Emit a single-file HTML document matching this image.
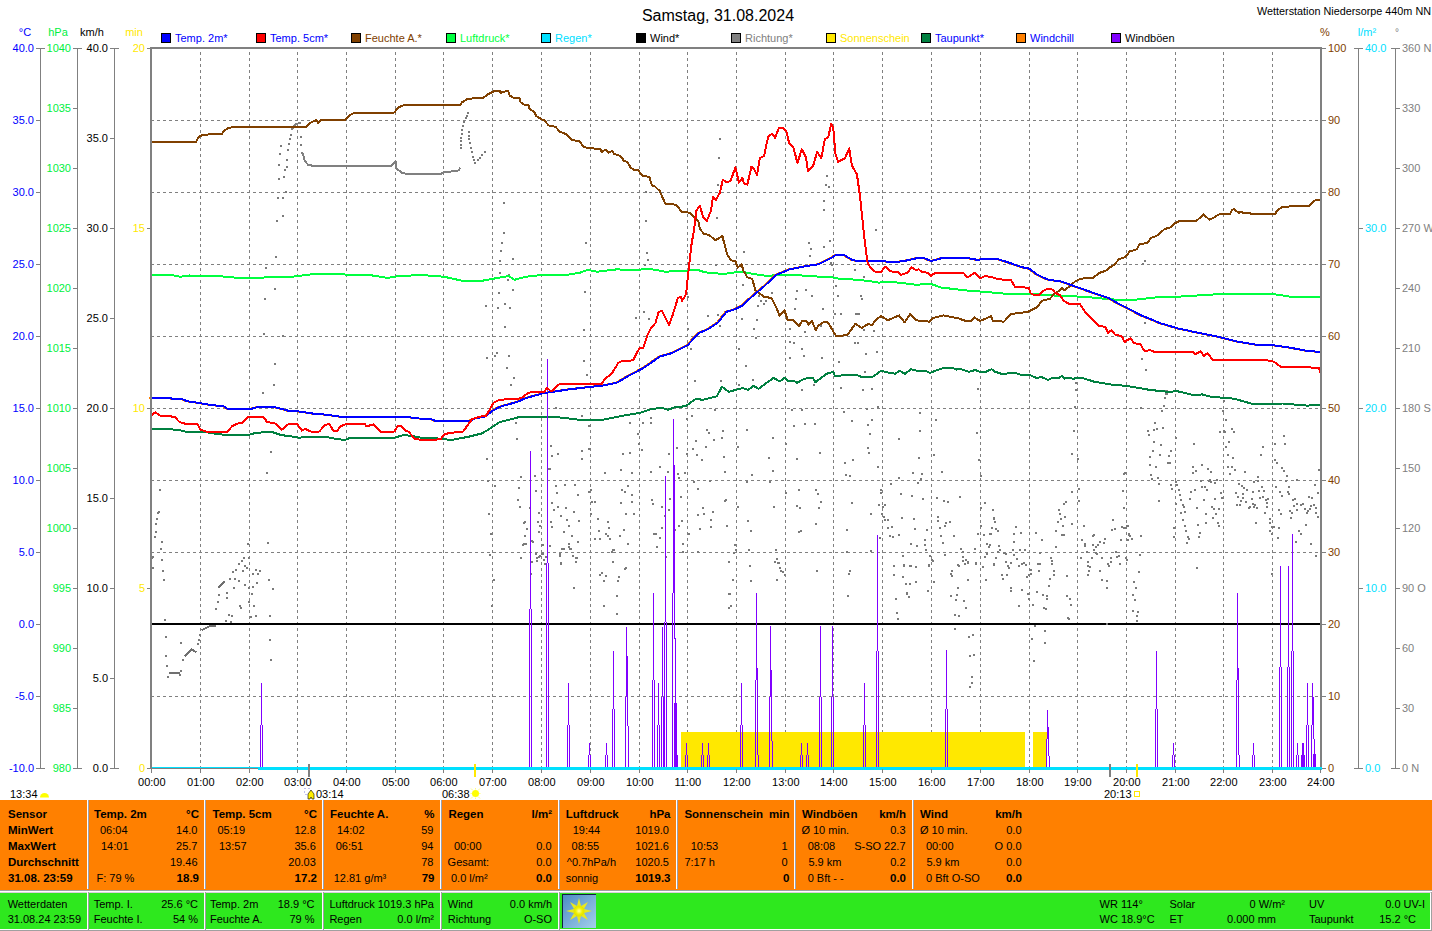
<!DOCTYPE html><html><head><meta charset="utf-8"><style>html,body{margin:0;padding:0;background:#fff;width:1432px;height:931px;overflow:hidden} svg{display:block} text{font-family:"Liberation Sans", sans-serif;font-size:11px}</style></head><body>
<svg width="1432" height="931" viewBox="0 0 1432 931">
<rect x="0" y="0" width="1432" height="931" fill="#fff"/>
<path d="M200.5 49V768M249.5 49V768M297.5 49V768M346.5 49V768M395.5 49V768M443.5 49V768M492.5 49V768M541.5 49V768M590.5 49V768M639.5 49V768M687.5 49V768M736.5 49V768M785.5 49V768M833.5 49V768M882.5 49V768M931.5 49V768M980.5 49V768M1029.5 49V768M1077.5 49V768M1126.5 49V768M1175.5 49V768M1223.5 49V768M1272.5 49V768" stroke="#808080" stroke-width="1" stroke-dasharray="3 3" stroke-dashoffset="-3" fill="none" shape-rendering="crispEdges"/>
<path d="M152 120.5H1320M152 192.5H1320M152 264.5H1320M152 336.5H1320M152 408.5H1320M152 480.5H1320M152 552.5H1320M152 624.5H1320M152 696.5H1320" stroke="#808080" stroke-width="1" stroke-dasharray="3 3" stroke-dashoffset="-5" fill="none" shape-rendering="crispEdges"/>
<rect x="152" y="623" width="1168" height="2" fill="#000"/>
<path d="M290 134h2v2h-2zM289 138h2v2h-2zM288 143h2v2h-2zM287 149h2v2h-2zM286 159h2v2h-2zM286 166h2v2h-2zM284 169h2v2h-2zM283 176h2v2h-2zM278 178h2v2h-2zM280 145h2v2h-2zM279 153h2v2h-2zM278 164h2v2h-2zM300 136h2v2h-2zM300 144h2v2h-2zM285 191h2v2h-2zM277 197h2v2h-2zM282 197h2v2h-2zM282 215h2v2h-2zM276 220h2v2h-2zM275 256h2v2h-2zM265 267h2v2h-2zM274 288h2v2h-2zM264 298h2v2h-2zM263 333h2v2h-2zM282 335h2v2h-2zM274 363h2v2h-2zM273 384h2v2h-2zM262 392h2v2h-2zM159 489h2v2h-2zM157 512h2v2h-2zM158 511h2v2h-2zM156 518h2v2h-2zM155 523h2v2h-2zM155 531h2v2h-2zM154 536h2v2h-2zM161 541h2v2h-2zM160 548h2v2h-2zM152 556h2v2h-2zM151 557h2v2h-2zM152 567h2v2h-2zM161 559h2v2h-2zM162 570h2v2h-2zM163 579h2v2h-2zM164 619h2v2h-2zM165 636h2v2h-2zM165 655h2v2h-2zM166 665h2v2h-2zM167 676h2v2h-2zM179 674h2v2h-2zM180 670h2v2h-2zM180 642h2v2h-2zM182 659h2v2h-2zM197 643h2v2h-2zM198 639h2v2h-2zM199 634h2v2h-2zM215 608h2v2h-2zM217 601h2v2h-2zM218 594h2v2h-2zM226 592h2v2h-2zM226 597h2v2h-2zM225 620h2v2h-2zM228 614h2v2h-2zM231 615h2v2h-2zM230 621h2v2h-2zM229 578h2v2h-2zM233 587h2v2h-2zM232 571h2v2h-2zM234 578h2v2h-2zM235 569h2v2h-2zM238 563h2v2h-2zM238 580h2v2h-2zM239 605h2v2h-2zM240 607h2v2h-2zM241 560h2v2h-2zM242 570h2v2h-2zM243 557h2v2h-2zM244 565h2v2h-2zM244 584h2v2h-2zM246 567h2v2h-2zM247 543h2v2h-2zM248 557h2v2h-2zM248 587h2v2h-2zM248 601h2v2h-2zM250 616h2v2h-2zM251 593h2v2h-2zM252 573h2v2h-2zM252 586h2v2h-2zM253 605h2v2h-2zM255 615h2v2h-2zM255 569h2v2h-2zM256 582h2v2h-2zM257 573h2v2h-2zM259 570h2v2h-2zM266 472h2v2h-2zM270 451h2v2h-2zM267 542h2v2h-2zM268 579h2v2h-2zM272 588h2v2h-2zM269 615h2v2h-2zM269 639h2v2h-2zM270 659h2v2h-2zM467 112h2v2h-2zM466 115h2v2h-2zM465 117h2v2h-2zM463 121h2v2h-2zM462 125h2v2h-2zM461 129h2v2h-2zM461 133h2v2h-2zM460 137h2v2h-2zM460 140h2v2h-2zM460 144h2v2h-2zM460 147h2v2h-2zM468 131h2v2h-2zM468 135h2v2h-2zM468 138h2v2h-2zM469 142h2v2h-2zM470 147h2v2h-2zM471 151h2v2h-2zM472 156h2v2h-2zM473 159h2v2h-2zM474 162h2v2h-2zM477 159h2v2h-2zM479 157h2v2h-2zM481 154h2v2h-2zM484 151h2v2h-2zM503 202h2v2h-2zM503 232h2v2h-2zM501 242h2v2h-2zM500 250h2v2h-2zM499 260h2v2h-2zM512 258h2v2h-2zM499 272h2v2h-2zM508 274h2v2h-2zM507 279h2v2h-2zM498 292h2v2h-2zM512 289h2v2h-2zM485 305h2v2h-2zM497 307h2v2h-2zM504 303h2v2h-2zM509 307h2v2h-2zM504 326h2v2h-2zM585 242h2v2h-2zM584 291h2v2h-2zM583 329h2v2h-2zM486 357h2v2h-2zM494 355h2v2h-2zM496 352h2v2h-2zM508 355h2v2h-2zM506 367h2v2h-2zM513 377h2v2h-2zM510 384h2v2h-2zM515 422h2v2h-2zM516 438h2v2h-2zM486 458h2v2h-2zM487 480h2v2h-2zM494 485h2v2h-2zM488 513h2v2h-2zM490 533h2v2h-2zM489 554h2v2h-2zM520 476h2v2h-2zM518 487h2v2h-2zM517 499h2v2h-2zM519 506h2v2h-2zM523 522h2v2h-2zM524 521h2v2h-2zM526 528h2v2h-2zM524 535h2v2h-2zM523 543h2v2h-2zM525 543h2v2h-2zM520 557h2v2h-2zM529 507h2v2h-2zM534 475h2v2h-2zM535 490h2v2h-2zM538 512h2v2h-2zM537 521h2v2h-2zM539 525h2v2h-2zM538 531h2v2h-2zM532 541h2v2h-2zM541 544h2v2h-2zM541 553h2v2h-2zM538 556h2v2h-2zM536 560h2v2h-2zM543 559h2v2h-2zM547 468h2v2h-2zM550 445h2v2h-2zM551 455h2v2h-2zM555 407h2v2h-2zM557 453h2v2h-2zM555 485h2v2h-2zM556 492h2v2h-2zM551 502h2v2h-2zM557 506h2v2h-2zM553 509h2v2h-2zM551 526h2v2h-2zM560 515h2v2h-2zM564 484h2v2h-2zM565 507h2v2h-2zM566 519h2v2h-2zM568 525h2v2h-2zM563 531h2v2h-2zM561 548h2v2h-2zM568 546h2v2h-2zM569 548h2v2h-2zM571 535h2v2h-2zM573 511h2v2h-2zM574 484h2v2h-2zM578 520h2v2h-2zM577 494h2v2h-2zM577 541h2v2h-2zM575 557h2v2h-2zM559 555h2v2h-2zM560 562h2v2h-2zM549 545h2v2h-2zM581 415h2v2h-2zM583 360h2v2h-2zM586 374h2v2h-2zM588 425h2v2h-2zM581 450h2v2h-2zM581 458h2v2h-2zM588 448h2v2h-2zM588 491h2v2h-2zM550 521h2v2h-2zM549 468h2v2h-2zM489 554h2v2h-2zM493 579h2v2h-2zM491 605h2v2h-2zM522 544h2v2h-2zM525 543h2v2h-2zM520 557h2v2h-2zM531 540h2v2h-2zM531 561h2v2h-2zM530 573h2v2h-2zM535 553h2v2h-2zM536 557h2v2h-2zM539 555h2v2h-2zM542 544h2v2h-2zM542 553h2v2h-2zM544 563h2v2h-2zM545 556h2v2h-2zM549 545h2v2h-2zM559 553h2v2h-2zM560 563h2v2h-2zM563 548h2v2h-2zM568 543h2v2h-2zM570 548h2v2h-2zM572 555h2v2h-2zM576 557h2v2h-2zM575 561h2v2h-2zM577 541h2v2h-2zM573 587h2v2h-2zM719 138h2v2h-2zM718 157h2v2h-2zM717 184h2v2h-2zM645 191h2v2h-2zM645 220h2v2h-2zM646 252h2v2h-2zM647 259h2v2h-2zM644 264h2v2h-2zM716 217h2v2h-2zM715 264h2v2h-2zM687 296h2v2h-2zM643 311h2v2h-2zM635 317h2v2h-2zM648 318h2v2h-2zM687 328h2v2h-2zM707 315h2v2h-2zM717 314h2v2h-2zM719 325h2v2h-2zM690 348h2v2h-2zM694 380h2v2h-2zM720 380h2v2h-2zM686 418h2v2h-2zM691 415h2v2h-2zM714 409h2v2h-2zM650 417h2v2h-2zM642 422h2v2h-2zM629 422h2v2h-2zM637 433h2v2h-2zM638 443h2v2h-2zM641 449h2v2h-2zM650 422h2v2h-2zM706 429h2v2h-2zM708 432h2v2h-2zM695 440h2v2h-2zM713 439h2v2h-2zM722 430h2v2h-2zM705 446h2v2h-2zM692 448h2v2h-2zM676 447h2v2h-2zM668 453h2v2h-2zM696 454h2v2h-2zM701 459h2v2h-2zM723 456h2v2h-2zM686 453h2v2h-2zM622 453h2v2h-2zM629 452h2v2h-2zM620 469h2v2h-2zM604 472h2v2h-2zM631 472h2v2h-2zM650 471h2v2h-2zM659 466h2v2h-2zM667 471h2v2h-2zM677 473h2v2h-2zM684 472h2v2h-2zM678 477h2v2h-2zM724 471h2v2h-2zM709 480h2v2h-2zM693 481h2v2h-2zM627 485h2v2h-2zM621 489h2v2h-2zM624 491h2v2h-2zM631 494h2v2h-2zM590 489h2v2h-2zM591 501h2v2h-2zM594 501h2v2h-2zM620 502h2v2h-2zM631 501h2v2h-2zM651 499h2v2h-2zM652 503h2v2h-2zM669 498h2v2h-2zM680 496h2v2h-2zM697 488h2v2h-2zM725 499h2v2h-2zM702 507h2v2h-2zM712 511h2v2h-2zM697 514h2v2h-2zM703 513h2v2h-2zM625 513h2v2h-2zM633 513h2v2h-2zM590 513h2v2h-2zM597 518h2v2h-2zM607 521h2v2h-2zM661 506h2v2h-2zM664 515h2v2h-2zM668 509h2v2h-2zM681 520h2v2h-2zM678 525h2v2h-2zM661 527h2v2h-2zM673 515h2v2h-2zM710 519h2v2h-2zM710 526h2v2h-2zM726 525h2v2h-2zM699 528h2v2h-2zM688 533h2v2h-2zM682 543h2v2h-2zM674 529h2v2h-2zM659 537h2v2h-2zM655 533h2v2h-2zM653 533h2v2h-2zM623 529h2v2h-2zM619 535h2v2h-2zM608 527h2v2h-2zM605 533h2v2h-2zM607 535h2v2h-2zM609 538h2v2h-2zM598 530h2v2h-2zM594 538h2v2h-2zM599 538h2v2h-2zM627 543h2v2h-2zM612 549h2v2h-2zM613 549h2v2h-2zM611 551h2v2h-2zM656 546h2v2h-2zM665 556h2v2h-2zM612 561h2v2h-2zM625 567h2v2h-2zM682 551h2v2h-2zM728 561h2v2h-2zM697 551h2v2h-2zM612 561h2v2h-2zM624 568h2v2h-2zM599 574h2v2h-2zM601 572h2v2h-2zM605 575h2v2h-2zM618 576h2v2h-2zM603 580h2v2h-2zM617 580h2v2h-2zM616 595h2v2h-2zM603 605h2v2h-2zM616 613h2v2h-2zM728 561h2v2h-2zM728 593h2v2h-2zM728 607h2v2h-2zM826 175h2v2h-2zM825 184h2v2h-2zM828 186h2v2h-2zM823 200h2v2h-2zM823 209h2v2h-2zM808 242h2v2h-2zM810 248h2v2h-2zM823 246h2v2h-2zM829 240h2v2h-2zM809 255h2v2h-2zM743 251h2v2h-2zM742 284h2v2h-2zM758 295h2v2h-2zM760 300h2v2h-2zM763 303h2v2h-2zM765 300h2v2h-2zM771 292h2v2h-2zM757 305h2v2h-2zM741 318h2v2h-2zM756 319h2v2h-2zM753 328h2v2h-2zM796 290h2v2h-2zM795 298h2v2h-2zM805 289h2v2h-2zM811 295h2v2h-2zM794 308h2v2h-2zM822 308h2v2h-2zM830 262h2v2h-2zM831 264h2v2h-2zM835 285h2v2h-2zM837 295h2v2h-2zM834 313h2v2h-2zM840 313h2v2h-2zM854 269h2v2h-2zM855 313h2v2h-2zM789 328h2v2h-2zM804 331h2v2h-2zM820 325h2v2h-2zM755 337h2v2h-2zM755 337h2v2h-2zM738 348h2v2h-2zM745 365h2v2h-2zM752 379h2v2h-2zM720 380h2v2h-2zM738 384h2v2h-2zM789 341h2v2h-2zM793 342h2v2h-2zM801 348h2v2h-2zM803 355h2v2h-2zM789 357h2v2h-2zM821 357h2v2h-2zM838 361h2v2h-2zM854 342h2v2h-2zM840 387h2v2h-2zM801 389h2v2h-2zM813 384h2v2h-2zM791 409h2v2h-2zM801 409h2v2h-2zM843 411h2v2h-2zM722 430h2v2h-2zM721 437h2v2h-2zM746 429h2v2h-2zM772 437h2v2h-2zM793 425h2v2h-2zM804 423h2v2h-2zM814 423h2v2h-2zM851 420h2v2h-2zM737 446h2v2h-2zM785 443h2v2h-2zM723 456h2v2h-2zM768 457h2v2h-2zM796 458h2v2h-2zM819 452h2v2h-2zM844 462h2v2h-2zM852 459h2v2h-2zM724 471h2v2h-2zM772 470h2v2h-2zM751 474h2v2h-2zM746 481h2v2h-2zM769 481h2v2h-2zM845 474h2v2h-2zM849 475h2v2h-2zM724 500h2v2h-2zM737 506h2v2h-2zM773 506h2v2h-2zM785 492h2v2h-2zM798 489h2v2h-2zM796 505h2v2h-2zM799 507h2v2h-2zM815 489h2v2h-2zM817 493h2v2h-2zM820 501h2v2h-2zM818 507h2v2h-2zM851 502h2v2h-2zM747 520h2v2h-2zM726 525h2v2h-2zM750 530h2v2h-2zM815 523h2v2h-2zM798 531h2v2h-2zM800 530h2v2h-2zM846 529h2v2h-2zM734 544h2v2h-2zM735 549h2v2h-2zM733 552h2v2h-2zM748 549h2v2h-2zM775 549h2v2h-2zM776 558h2v2h-2zM778 562h2v2h-2zM728 561h2v2h-2zM749 565h2v2h-2zM846 551h2v2h-2zM728 561h2v2h-2zM749 565h2v2h-2zM774 561h2v2h-2zM777 562h2v2h-2zM779 567h2v2h-2zM780 570h2v2h-2zM782 571h2v2h-2zM784 574h2v2h-2zM732 579h2v2h-2zM750 580h2v2h-2zM776 579h2v2h-2zM729 593h2v2h-2zM730 605h2v2h-2zM728 607h2v2h-2zM816 570h2v2h-2zM849 570h2v2h-2zM848 573h2v2h-2zM847 595h2v2h-2zM875 229h2v2h-2zM863 276h2v2h-2zM860 295h2v2h-2zM861 298h2v2h-2zM857 313h2v2h-2zM858 313h2v2h-2zM873 330h2v2h-2zM863 329h2v2h-2zM873 330h2v2h-2zM857 342h2v2h-2zM865 353h2v2h-2zM876 351h2v2h-2zM864 371h2v2h-2zM862 389h2v2h-2zM871 388h2v2h-2zM977 388h2v2h-2zM866 408h2v2h-2zM877 406h2v2h-2zM871 419h2v2h-2zM919 412h2v2h-2zM935 419h2v2h-2zM867 424h2v2h-2zM869 433h2v2h-2zM898 438h2v2h-2zM919 430h2v2h-2zM976 432h2v2h-2zM867 447h2v2h-2zM868 452h2v2h-2zM918 457h2v2h-2zM933 454h2v2h-2zM978 459h2v2h-2zM877 466h2v2h-2zM912 472h2v2h-2zM921 473h2v2h-2zM941 471h2v2h-2zM898 477h2v2h-2zM917 482h2v2h-2zM920 478h2v2h-2zM980 475h2v2h-2zM890 483h2v2h-2zM880 489h2v2h-2zM880 492h2v2h-2zM900 493h2v2h-2zM911 495h2v2h-2zM922 498h2v2h-2zM936 497h2v2h-2zM943 500h2v2h-2zM947 501h2v2h-2zM959 496h2v2h-2zM878 504h2v2h-2zM882 506h2v2h-2zM884 504h2v2h-2zM870 513h2v2h-2zM881 513h2v2h-2zM883 516h2v2h-2zM884 519h2v2h-2zM887 519h2v2h-2zM901 517h2v2h-2zM913 518h2v2h-2zM937 516h2v2h-2zM937 520h2v2h-2zM945 522h2v2h-2zM949 521h2v2h-2zM944 525h2v2h-2zM939 527h2v2h-2zM984 502h2v2h-2zM980 507h2v2h-2zM992 509h2v2h-2zM993 518h2v2h-2zM887 527h2v2h-2zM891 526h2v2h-2zM914 528h2v2h-2zM926 529h2v2h-2zM940 535h2v2h-2zM953 535h2v2h-2zM980 525h2v2h-2zM977 533h2v2h-2zM983 534h2v2h-2zM990 533h2v2h-2zM889 535h2v2h-2zM892 536h2v2h-2zM898 534h2v2h-2zM879 537h2v2h-2zM910 543h2v2h-2zM916 545h2v2h-2zM924 539h2v2h-2zM924 544h2v2h-2zM942 542h2v2h-2zM986 543h2v2h-2zM988 546h2v2h-2zM870 550h2v2h-2zM902 555h2v2h-2zM925 549h2v2h-2zM929 555h2v2h-2zM931 559h2v2h-2zM944 554h2v2h-2zM960 548h2v2h-2zM962 551h2v2h-2zM962 556h2v2h-2zM965 559h2v2h-2zM967 562h2v2h-2zM974 548h2v2h-2zM984 556h2v2h-2zM986 553h2v2h-2zM893 565h2v2h-2zM903 564h2v2h-2zM909 565h2v2h-2zM915 566h2v2h-2zM928 564h2v2h-2zM957 564h2v2h-2zM975 563h2v2h-2zM982 566h2v2h-2zM993 564h2v2h-2zM893 565h2v2h-2zM903 565h2v2h-2zM910 565h2v2h-2zM915 566h2v2h-2zM893 574h2v2h-2zM902 576h2v2h-2zM905 583h2v2h-2zM909 583h2v2h-2zM915 581h2v2h-2zM906 592h2v2h-2zM906 593h2v2h-2zM908 596h2v2h-2zM895 598h2v2h-2zM896 612h2v2h-2zM897 618h2v2h-2zM928 565h2v2h-2zM932 560h2v2h-2zM933 581h2v2h-2zM927 590h2v2h-2zM951 570h2v2h-2zM950 573h2v2h-2zM951 575h2v2h-2zM958 565h2v2h-2zM962 560h2v2h-2zM964 563h2v2h-2zM967 561h2v2h-2zM975 562h2v2h-2zM982 566h2v2h-2zM993 563h2v2h-2zM967 579h2v2h-2zM985 579h2v2h-2zM957 587h2v2h-2zM950 595h2v2h-2zM956 594h2v2h-2zM955 599h2v2h-2zM963 600h2v2h-2zM965 607h2v2h-2zM954 614h2v2h-2zM958 615h2v2h-2zM954 628h2v2h-2zM968 636h2v2h-2zM972 634h2v2h-2zM969 655h2v2h-2zM973 654h2v2h-2zM971 676h2v2h-2zM971 682h2v2h-2zM969 686h2v2h-2zM1075 382h2v2h-2zM1075 389h2v2h-2zM1074 406h2v2h-2zM1073 430h2v2h-2zM1071 453h2v2h-2zM1077 458h2v2h-2zM992 509h2v2h-2zM993 517h2v2h-2zM994 521h2v2h-2zM991 527h2v2h-2zM995 528h2v2h-2zM997 530h2v2h-2zM989 533h2v2h-2zM1015 526h2v2h-2zM1013 533h2v2h-2zM1020 532h2v2h-2zM1013 541h2v2h-2zM989 544h2v2h-2zM998 545h2v2h-2zM999 549h2v2h-2zM997 551h2v2h-2zM1003 552h2v2h-2zM1005 553h2v2h-2zM1012 549h2v2h-2zM1013 554h2v2h-2zM1019 549h2v2h-2zM1024 549h2v2h-2zM995 557h2v2h-2zM993 563h2v2h-2zM1005 561h2v2h-2zM1007 565h2v2h-2zM1010 562h2v2h-2zM1008 567h2v2h-2zM1016 558h2v2h-2zM1018 565h2v2h-2zM1021 563h2v2h-2zM1023 562h2v2h-2zM1025 564h2v2h-2zM1001 574h2v2h-2zM1002 578h2v2h-2zM1006 574h2v2h-2zM1010 587h2v2h-2zM1010 590h2v2h-2zM1021 589h2v2h-2zM1018 605h2v2h-2zM1026 576h2v2h-2zM1028 574h2v2h-2zM1030 569h2v2h-2zM1030 573h2v2h-2zM1027 593h2v2h-2zM1028 598h2v2h-2zM1035 532h2v2h-2zM1041 539h2v2h-2zM1039 552h2v2h-2zM1037 563h2v2h-2zM1039 563h2v2h-2zM1038 570h2v2h-2zM1036 591h2v2h-2zM1032 604h2v2h-2zM1042 594h2v2h-2zM1046 595h2v2h-2zM1046 598h2v2h-2zM1043 607h2v2h-2zM1045 608h2v2h-2zM1048 585h2v2h-2zM1049 578h2v2h-2zM1050 557h2v2h-2zM1051 560h2v2h-2zM1051 563h2v2h-2zM1053 570h2v2h-2zM1053 574h2v2h-2zM1055 546h2v2h-2zM1055 530h2v2h-2zM1057 521h2v2h-2zM1058 509h2v2h-2zM1059 513h2v2h-2zM1060 518h2v2h-2zM1063 503h2v2h-2zM1065 501h2v2h-2zM1064 516h2v2h-2zM1062 525h2v2h-2zM1061 534h2v2h-2zM1063 534h2v2h-2zM1071 491h2v2h-2zM1078 488h2v2h-2zM1078 500h2v2h-2zM1071 523h2v2h-2zM1066 575h2v2h-2zM1066 595h2v2h-2zM1069 598h2v2h-2zM1070 604h2v2h-2zM1067 617h2v2h-2zM1068 618h2v2h-2zM1034 625h2v2h-2zM1031 638h2v2h-2zM1044 630h2v2h-2zM1044 642h2v2h-2zM1033 660h2v2h-2zM1083 525h2v2h-2zM1081 539h2v2h-2zM1084 543h2v2h-2zM1084 545h2v2h-2zM1080 557h2v2h-2zM1086 551h2v2h-2zM1087 561h2v2h-2zM1087 565h2v2h-2zM1089 566h2v2h-2zM1088 570h2v2h-2zM1087 574h2v2h-2zM1092 535h2v2h-2zM1093 534h2v2h-2zM1092 544h2v2h-2zM1091 557h2v2h-2zM1093 549h2v2h-2zM1095 546h2v2h-2zM1097 544h2v2h-2zM1099 541h2v2h-2zM1103 542h2v2h-2zM1104 538h2v2h-2zM1095 552h2v2h-2zM1096 553h2v2h-2zM1101 557h2v2h-2zM1099 570h2v2h-2zM1101 579h2v2h-2zM1106 580h2v2h-2zM1106 587h2v2h-2zM1107 563h2v2h-2zM1108 565h2v2h-2zM1110 561h2v2h-2zM1110 557h2v2h-2zM1112 519h2v2h-2zM1111 529h2v2h-2zM1114 528h2v2h-2zM1115 551h2v2h-2zM1116 556h2v2h-2zM1118 555h2v2h-2zM1119 563h2v2h-2zM1121 526h2v2h-2zM1123 527h2v2h-2zM1124 527h2v2h-2zM1127 525h2v2h-2zM1120 539h2v2h-2zM1123 507h2v2h-2zM1122 490h2v2h-2zM1123 473h2v2h-2zM1124 472h2v2h-2zM1125 557h2v2h-2zM1127 539h2v2h-2zM1128 534h2v2h-2zM1106 623h2v2h-2zM1166 390h2v2h-2zM1165 393h2v2h-2zM1164 397h2v2h-2zM1163 405h2v2h-2zM1161 410h2v2h-2zM1140 407h2v2h-2zM1154 422h2v2h-2zM1147 430h2v2h-2zM1153 429h2v2h-2zM1156 428h2v2h-2zM1162 427h2v2h-2zM1148 434h2v2h-2zM1153 441h2v2h-2zM1160 444h2v2h-2zM1152 450h2v2h-2zM1159 454h2v2h-2zM1170 450h2v2h-2zM1168 455h2v2h-2zM1149 456h2v2h-2zM1167 462h2v2h-2zM1169 462h2v2h-2zM1149 464h2v2h-2zM1155 466h2v2h-2zM1150 474h2v2h-2zM1151 478h2v2h-2zM1157 477h2v2h-2zM1158 483h2v2h-2zM1158 500h2v2h-2zM1124 472h2v2h-2zM1175 437h2v2h-2zM1193 443h2v2h-2zM1192 466h2v2h-2zM1192 472h2v2h-2zM1195 470h2v2h-2zM1201 464h2v2h-2zM1207 468h2v2h-2zM1210 471h2v2h-2zM1170 484h2v2h-2zM1171 488h2v2h-2zM1175 481h2v2h-2zM1176 484h2v2h-2zM1178 489h2v2h-2zM1179 494h2v2h-2zM1180 499h2v2h-2zM1182 504h2v2h-2zM1183 506h2v2h-2zM1175 503h2v2h-2zM1180 512h2v2h-2zM1184 511h2v2h-2zM1182 519h2v2h-2zM1184 525h2v2h-2zM1185 530h2v2h-2zM1187 536h2v2h-2zM1188 538h2v2h-2zM1186 542h2v2h-2zM1173 527h2v2h-2zM1173 536h2v2h-2zM1190 491h2v2h-2zM1194 489h2v2h-2zM1189 498h2v2h-2zM1196 507h2v2h-2zM1197 524h2v2h-2zM1199 532h2v2h-2zM1198 536h2v2h-2zM1200 480h2v2h-2zM1201 486h2v2h-2zM1204 486h2v2h-2zM1206 489h2v2h-2zM1203 499h2v2h-2zM1205 513h2v2h-2zM1205 522h2v2h-2zM1208 480h2v2h-2zM1209 479h2v2h-2zM1210 481h2v2h-2zM1214 482h2v2h-2zM1216 479h2v2h-2zM1214 498h2v2h-2zM1211 506h2v2h-2zM1213 508h2v2h-2zM1215 513h2v2h-2zM1212 517h2v2h-2zM1218 508h2v2h-2zM1217 522h2v2h-2zM1218 525h2v2h-2zM1220 492h2v2h-2zM1221 497h2v2h-2zM1219 431h2v2h-2zM1223 430h2v2h-2zM1224 431h2v2h-2zM1225 419h2v2h-2zM1222 410h2v2h-2zM1223 400h2v2h-2zM1228 441h2v2h-2zM1225 446h2v2h-2zM1227 454h2v2h-2zM1227 466h2v2h-2zM1229 473h2v2h-2zM1231 466h2v2h-2zM1232 457h2v2h-2zM1234 469h2v2h-2zM1231 428h2v2h-2zM1233 431h2v2h-2zM1244 471h2v2h-2zM1235 492h2v2h-2zM1237 496h2v2h-2zM1236 504h2v2h-2zM1239 504h2v2h-2zM1240 500h2v2h-2zM1242 497h2v2h-2zM1242 493h2v2h-2zM1238 483h2v2h-2zM1241 485h2v2h-2zM1243 487h2v2h-2zM1246 489h2v2h-2zM1245 501h2v2h-2zM1248 507h2v2h-2zM1249 506h2v2h-2zM1252 503h2v2h-2zM1253 506h2v2h-2zM1251 498h2v2h-2zM1254 504h2v2h-2zM1256 507h2v2h-2zM1252 491h2v2h-2zM1253 481h2v2h-2zM1257 476h2v2h-2zM1257 480h2v2h-2zM1258 490h2v2h-2zM1259 497h2v2h-2zM1261 486h2v2h-2zM1262 496h2v2h-2zM1263 490h2v2h-2zM1265 499h2v2h-2zM1267 498h2v2h-2zM1266 502h2v2h-2zM1266 506h2v2h-2zM1264 512h2v2h-2zM1255 522h2v2h-2zM1260 454h2v2h-2zM1262 446h2v2h-2zM1269 518h2v2h-2zM1269 522h2v2h-2zM1271 526h2v2h-2zM1269 530h2v2h-2zM1273 526h2v2h-2zM1271 533h2v2h-2zM1277 537h2v2h-2zM1278 527h2v2h-2zM1274 443h2v2h-2zM1274 459h2v2h-2zM1276 462h2v2h-2zM1283 435h2v2h-2zM1284 443h2v2h-2zM1281 467h2v2h-2zM1283 470h2v2h-2zM1286 475h2v2h-2zM1285 480h2v2h-2zM1275 486h2v2h-2zM1279 491h2v2h-2zM1281 495h2v2h-2zM1288 486h2v2h-2zM1287 491h2v2h-2zM1288 493h2v2h-2zM1278 509h2v2h-2zM1280 513h2v2h-2zM1292 499h2v2h-2zM1294 498h2v2h-2zM1296 503h2v2h-2zM1293 505h2v2h-2zM1289 510h2v2h-2zM1290 517h2v2h-2zM1291 512h2v2h-2zM1296 509h2v2h-2zM1300 504h2v2h-2zM1302 503h2v2h-2zM1304 508h2v2h-2zM1306 512h2v2h-2zM1307 510h2v2h-2zM1309 508h2v2h-2zM1310 505h2v2h-2zM1313 504h2v2h-2zM1315 507h2v2h-2zM1315 512h2v2h-2zM1317 516h2v2h-2zM1308 496h2v2h-2zM1311 497h2v2h-2zM1314 484h2v2h-2zM1317 492h2v2h-2zM1318 469h2v2h-2zM1296 479h2v2h-2zM1305 524h2v2h-2zM1298 530h2v2h-2zM1300 533h2v2h-2zM1295 541h2v2h-2zM1310 543h2v2h-2zM1315 555h2v2h-2zM1126 525h2v2h-2zM1125 527h2v2h-2zM1128 533h2v2h-2zM1129 535h2v2h-2zM1127 539h2v2h-2zM1131 538h2v2h-2zM1140 535h2v2h-2zM1139 554h2v2h-2zM1142 263h2v2h-2zM1144 260h2v2h-2zM1144 322h2v2h-2zM1141 358h2v2h-2zM1145 369h2v2h-2zM1165 390h2v2h-2zM1166 393h2v2h-2zM1126 559h2v2h-2zM1139 554h2v2h-2zM1138 571h2v2h-2zM1133 581h2v2h-2zM1135 587h2v2h-2zM1132 594h2v2h-2zM1134 599h2v2h-2zM1132 610h2v2h-2zM1137 611h2v2h-2zM1136 615h2v2h-2zM1136 620h2v2h-2zM1196 567h2v2h-2zM1271 573h2v2h-2zM1315 555h2v2h-2z" fill="#7a7a7a"/>
<path d="M169.3 672.5 L179.7 672.5" stroke="#707070" stroke-width="2" fill="none" stroke-linejoin="round" shape-rendering="crispEdges"/>
<path d="M184.8 656.0 L191.3 649.5 L196.4 652.1" stroke="#707070" stroke-width="2" fill="none" stroke-linejoin="round" shape-rendering="crispEdges"/>
<path d="M201.6 630.2 L209.3 626.3 L216.5 625.5" stroke="#707070" stroke-width="2" fill="none" stroke-linejoin="round" shape-rendering="crispEdges"/>
<path d="M218.3 587.6 L224.8 581.2" stroke="#707070" stroke-width="2" fill="none" stroke-linejoin="round" shape-rendering="crispEdges"/>
<rect x="681" y="732" width="344" height="35" fill="#ffe800"/>
<rect x="1033" y="732" width="14" height="35" fill="#ffe800"/>
<path d="M302.0 152.0 L303.8 157.0 L304.7 160.4 L306.1 162.6 L308.3 164.9 L312.1 165.6 L391.3 165.6 L393.2 164.2 L395.4 161.0 L396.3 163.0 L396.0 167.9 L401.4 172.6 L405.1 173.6 L441.6 173.6 L444.1 171.7 L455.4 171.4 L458.6 170.4 L460.2 167.6" stroke="#808080" stroke-width="2" fill="none" stroke-linejoin="round" shape-rendering="crispEdges"/>
<path d="M291.5 130.0 L294.8 124.8 L297.0 123.6 L301.0 123.2" stroke="#808080" stroke-width="2" fill="none" stroke-linejoin="round" shape-rendering="crispEdges"/>
<path d="M150.0 274.9 L170.7 274.9 L180.2 276.8 L189.6 275.5 L206.6 276.4 L221.6 276.4 L238.6 277.9 L259.4 277.9 L272.5 276.8 L291.4 276.8 L310.3 274.5 L323.5 273.6 L338.5 273.6 L351.7 275.5 L363.0 274.5 L372.5 275.5 L387.6 277.9 L397.0 276.4 L420.0 274.9 L444.5 276.8 L463.4 281.1 L480.3 281.1 L493.5 278.7 L508.6 276.0 L514.3 279.8 L525.6 276.8 L542.5 274.9 L563.3 275.5 L580.3 272.6 L587.8 269.8 L597.2 271.7 L618.0 269.2 L627.4 270.4 L650.0 268.9 L665.1 271.7 L686.1 270.7 L697.4 269.9 L705.5 272.4 L723.2 274.0 L740.9 271.6 L753.8 274.0 L766.7 275.9 L782.8 274.8 L798.9 275.3 L815.0 276.4 L831.2 277.2 L839.2 278.8 L855.3 279.6 L870.0 281.2 L878.2 282.6 L892.1 281.9 L915.9 284.7 L931.2 284.0 L941.0 287.5 L964.7 290.3 L985.7 292.0 L1006.6 293.8 L1027.6 293.8 L1041.6 294.7 L1060.0 295.9 L1084.9 296.8 L1105.9 298.9 L1119.8 300.0 L1136.6 299.6 L1154.7 297.5 L1175.7 296.8 L1202.2 295.2 L1223.2 293.8 L1272.0 293.8 L1289.5 296.6 L1320.9 297.0" stroke="#00ff40" stroke-width="2" fill="none" stroke-linejoin="round" shape-rendering="crispEdges"/>
<path d="M150.0 429.2 L171.0 429.2 L181.4 430.6 L188.4 432.4 L198.9 432.4 L202.4 431.5 L218.1 434.1 L226.8 435.0 L247.8 435.0 L256.5 432.7 L272.2 432.0 L280.9 435.0 L293.2 436.7 L298.4 437.6 L324.6 436.7 L338.5 439.4 L345.5 439.7 L350.8 437.6 L394.4 437.6 L403.7 435.1 L412.5 436.0 L421.2 437.7 L440.4 438.6 L450.9 440.0 L468.3 436.8 L482.3 433.3 L489.3 429.0 L499.7 422.0 L513.7 418.5 L520.7 416.7 L538.2 416.7 L562.6 417.6 L581.8 420.2 L601.0 420.2 L621.9 415.9 L640.0 412.8 L650.5 409.4 L661.0 407.6 L667.9 409.7 L674.9 407.3 L685.4 406.2 L695.9 398.9 L702.8 399.8 L716.8 396.3 L722.1 386.7 L729.0 391.9 L736.0 389.8 L743.0 388.1 L748.2 389.8 L753.5 385.8 L758.7 388.8 L765.7 383.5 L773.6 377.9 L779.7 381.4 L784.9 377.6 L788.4 381.4 L793.6 380.6 L797.1 382.8 L804.1 378.8 L812.8 377.6 L815.5 382.3 L823.3 376.2 L828.5 372.7 L833.8 372.3 L834.7 375.8 L856.5 374.8 L861.7 377.1 L872.2 377.1 L880.9 370.9 L889.2 372.7 L895.4 373.8 L899.2 370.7 L905.3 373.8 L910.7 369.2 L916.9 370.7 L926.1 371.2 L929.9 373.0 L935.3 370.7 L943.0 368.1 L953.7 368.4 L956.8 369.7 L959.1 368.7 L969.1 371.8 L975.2 370.0 L979.8 371.8 L986.0 371.8 L991.4 369.2 L995.2 371.8 L1002.9 374.3 L1010.6 372.7 L1015.2 373.0 L1021.3 374.9 L1030.5 375.3 L1036.7 378.0 L1041.3 376.9 L1048.2 380.0 L1052.0 378.0 L1059.0 378.0 L1062.0 375.8 L1064.3 378.9 L1067.4 377.6 L1073.5 378.9 L1076.6 377.6 L1082.8 378.0 L1094.0 381.7 L1114.9 385.1 L1125.4 385.7 L1149.8 389.9 L1170.8 392.1 L1176.0 390.9 L1193.5 395.1 L1202.2 394.4 L1210.9 396.8 L1233.6 398.6 L1251.1 403.5 L1272.0 404.3 L1282.5 403.5 L1307.0 405.6 L1320.9 404.9" stroke="#008040" stroke-width="2" fill="none" stroke-linejoin="round" shape-rendering="crispEdges"/>
<path d="M150.0 141.8 L196.0 141.8 L198.9 136.7 L202.6 135.0 L210.0 134.3 L222.0 133.8 L223.3 131.3 L228.2 128.2 L233.0 127.0 L306.4 127.0 L310.0 122.8 L316.2 120.3 L318.0 122.8 L321.0 120.3 L345.5 119.6 L349.2 115.4 L355.3 112.5 L394.4 112.5 L398.0 107.6 L403.0 105.4 L460.4 105.4 L461.7 102.5 L467.8 98.8 L483.7 97.6 L488.5 93.9 L494.7 91.0 L495.6 90.9 L499.8 90.9 L500.5 93.3 L502.6 91.9 L508.2 90.9 L509.6 95.4 L513.7 97.9 L519.3 97.9 L520.7 102.3 L523.5 104.4 L528.4 105.1 L529.8 109.3 L534.7 112.1 L536.1 116.0 L541.7 119.4 L543.8 119.8 L548.7 125.4 L555.6 126.8 L559.8 131.7 L565.4 133.8 L568.2 136.6 L572.4 140.3 L579.4 140.8 L582.9 146.3 L586.4 147.7 L590.6 148.4 L600.3 148.7 L601.7 151.9 L605.9 149.6 L608.7 152.6 L612.2 151.0 L614.3 154.0 L620.6 156.1 L624.1 161.0 L627.6 162.1 L630.4 167.3 L633.9 169.7 L638.7 170.1 L640.1 173.6 L643.6 176.4 L649.2 176.6 L652.0 185.4 L654.8 186.4 L659.7 191.0 L665.3 203.6 L671.6 203.6 L675.8 205.0 L676.4 205.5 L682.1 211.9 L690.1 212.7 L694.2 217.6 L698.2 220.8 L699.8 228.8 L703.8 233.7 L709.5 235.3 L715.1 240.1 L718.3 238.5 L722.4 236.1 L727.2 254.6 L731.2 260.3 L735.3 261.1 L737.7 267.5 L741.7 264.3 L743.3 270.7 L747.4 277.2 L752.2 278.8 L755.4 290.1 L759.4 293.3 L763.5 296.5 L771.5 298.1 L776.4 307.8 L779.6 315.9 L784.4 310.2 L787.6 319.9 L792.5 319.9 L798.9 326.3 L802.2 320.7 L807.0 321.5 L808.6 324.7 L811.8 320.7 L815.8 330.4 L818.3 325.5 L824.7 321.5 L827.9 322.3 L836.0 336.0 L847.3 335.2 L855.3 323.9 L861.8 328.0 L868.4 323.8 L871.9 325.5 L875.4 320.3 L880.9 316.1 L887.9 320.3 L899.1 315.4 L904.7 322.4 L910.3 314.0 L915.9 320.3 L929.8 321.7 L932.6 318.2 L943.8 315.4 L957.8 318.2 L966.1 321.0 L971.7 320.7 L974.5 317.5 L980.1 321.0 L991.3 316.1 L992.7 320.7 L1003.9 321.7 L1010.8 314.0 L1027.6 311.9 L1037.4 307.0 L1041.6 300.8 L1050.0 298.7 L1054.1 293.8 L1058.4 291.3 L1061.9 287.8 L1064.0 290.6 L1069.6 286.4 L1075.1 281.5 L1080.7 278.7 L1093.3 277.7 L1098.9 273.1 L1105.9 270.7 L1108.7 268.2 L1114.2 264.7 L1119.1 259.1 L1125.4 257.0 L1129.6 251.5 L1136.6 249.4 L1139.4 244.5 L1147.8 242.8 L1150.6 238.2 L1157.5 235.4 L1164.5 229.1 L1170.1 227.4 L1175.7 222.8 L1179.9 220.7 L1196.6 220.7 L1203.6 214.4 L1209.2 219.6 L1212.0 218.6 L1219.0 214.4 L1230.0 214.1 L1232.1 210.0 L1234.2 209.0 L1235.6 210.7 L1239.1 212.8 L1241.2 211.8 L1242.9 212.8 L1249.6 212.8 L1250.3 213.9 L1275.4 213.9 L1276.4 211.4 L1282.0 206.9 L1289.7 206.5 L1290.8 205.7 L1309.6 205.7 L1311.0 203.7 L1315.9 199.9 L1320.1 199.6 L1320.8 198.5" stroke="#804000" stroke-width="2" fill="none" stroke-linejoin="round" shape-rendering="crispEdges"/>
<path d="M260.5 725.0V767.0M261.5 683.0V725.0M262.5 725.0V767.0M529.5 609.0V767.0M530.5 451.0V609.0M531.5 609.0V767.0M546.5 563.0V767.0M547.5 359.0V563.0M548.5 563.0V767.0M567.5 725.0V767.0M568.5 683.0V725.0M569.5 725.0V767.0M588.5 755.0V767.0M589.5 743.0V755.0M590.5 755.0V767.0M605.5 755.0V767.0M606.5 743.0V755.0M607.5 755.0V767.0M612.5 709.0V767.0M613.5 651.0V709.0M614.5 709.0V767.0M625.5 697.0V767.0M626.5 627.0V697.0M627.5 656.0V726.0M628.5 726.0V767.0M652.5 680.0V767.0M653.5 593.0V680.0M654.5 680.0V767.0M657.5 725.0V767.0M658.5 683.0V725.0M659.5 725.0V767.0M661.5 697.0V767.0M662.5 627.0V697.0M663.5 697.0V767.0M664.5 621.5V767.0M665.5 476.0V621.5M666.5 621.5V767.0M672.5 593.0V767.0M673.5 419.0V593.0M674.5 465.0V639.0M675.5 639.0V767.0M674.5 702.5V767.0M675.5 638.0V702.5M676.5 702.5V767.0M675.5 755.0V767.0M676.5 743.0V755.0M677.5 755.0V767.0M685.5 755.0V767.0M686.5 743.0V755.0M687.5 755.0V767.0M701.5 755.0V767.0M702.5 743.0V755.0M703.5 755.0V767.0M707.5 755.0V767.0M708.5 743.0V755.0M709.5 755.0V767.0M740.5 725.0V767.0M741.5 683.0V725.0M742.5 725.0V767.0M755.5 680.0V767.0M756.5 593.0V680.0M757.5 668.0V755.0M758.5 755.0V767.0M769.5 696.5V767.0M770.5 626.0V696.5M771.5 670.0V740.5M772.5 740.5V767.0M800.5 755.0V767.0M801.5 743.0V755.0M802.5 755.0V767.0M806.5 755.0V767.0M807.5 743.0V755.0M808.5 755.0V767.0M819.5 696.5V767.0M820.5 626.0V696.5M821.5 696.5V767.0M831.5 696.5V767.0M832.5 626.0V696.5M833.5 696.5V767.0M863.5 725.0V767.0M864.5 683.0V725.0M865.5 725.0V767.0M876.5 651.0V767.0M877.5 535.0V651.0M878.5 651.0V767.0M945.5 708.5V767.0M946.5 650.0V708.5M947.5 708.5V767.0M1046.5 738.5V767.0M1047.5 710.0V738.5M1048.5 727.0V755.5M1049.5 755.5V767.0M1155.5 709.0V767.0M1156.5 651.0V709.0M1157.5 709.0V767.0M1172.5 755.0V767.0M1173.5 743.0V755.0M1174.5 755.0V767.0M1236.5 680.0V767.0M1237.5 593.0V680.0M1238.5 668.0V755.0M1239.5 755.0V767.0M1252.5 755.0V767.0M1253.5 743.0V755.0M1254.5 755.0V767.0M1279.5 666.5V767.0M1280.5 566.0V666.5M1281.5 666.5V767.0M1287.5 666.5V767.0M1288.5 566.0V666.5M1289.5 666.5V767.0M1291.5 650.5V767.0M1292.5 534.0V650.5M1293.5 650.5V767.0M1296.5 755.0V767.0M1297.5 743.0V755.0M1298.5 755.0V767.0M1301.5 755.0V767.0M1302.5 743.0V755.0M1303.5 755.0V767.0M1302.5 755.0V767.0M1303.5 743.0V755.0M1304.5 755.0V767.0M1306.5 725.0V767.0M1307.5 683.0V725.0M1308.5 725.0V767.0M1311.5 725.0V767.0M1312.5 683.0V725.0M1313.5 697.0V739.0M1314.5 739.0V767.0M1313.5 754.0V767.0M1314.5 741.0V754.0M1315.5 754.0V767.0" stroke="#8000ff" stroke-width="1" fill="none" shape-rendering="crispEdges"/>
<path d="M149.0 397.8 L170.0 397.8 L170.8 398.9 L180.4 398.9 L186.5 401.3 L196.1 402.7 L203.1 403.9 L210.1 405.0 L222.3 406.2 L226.7 408.8 L250.3 408.8 L257.2 407.0 L273.0 407.0 L287.0 410.6 L297.4 411.4 L311.4 413.5 L327.0 414.9 L341.0 417.0 L396.9 417.0 L408.0 417.3 L418.4 418.5 L430.7 419.4 L434.2 420.8 L448.1 421.5 L469.0 420.8 L474.3 418.5 L484.8 416.2 L491.8 410.6 L498.7 406.8 L516.2 401.9 L524.9 398.1 L542.4 393.2 L568.6 389.3 L603.5 385.3 L615.7 382.7 L627.9 375.7 L641.5 368.5 L659.3 356.4 L670.5 353.2 L686.6 345.1 L697.9 333.1 L707.7 328.8 L717.3 322.3 L725.4 311.8 L733.5 309.4 L741.5 305.4 L752.8 294.9 L762.5 286.9 L775.4 274.8 L788.3 269.5 L806.0 265.9 L817.3 264.3 L830.2 257.9 L835.0 255.0 L843.0 255.0 L851.1 259.8 L856.0 261.1 L878.6 260.9 L892.5 262.3 L903.7 260.9 L914.9 258.4 L921.8 257.7 L930.2 260.9 L942.8 257.7 L965.1 257.7 L974.9 259.6 L988.9 259.3 L995.9 258.9 L1007.0 262.3 L1021.0 267.2 L1028.0 268.6 L1036.4 274.9 L1047.5 279.8 L1060.2 281.5 L1070.0 285.0 L1083.9 289.9 L1093.7 293.4 L1107.7 298.2 L1120.2 305.2 L1132.8 311.5 L1140.1 315.3 L1159.3 323.2 L1176.8 328.4 L1201.2 333.6 L1218.7 337.1 L1236.1 341.5 L1253.6 344.5 L1271.0 345.0 L1288.5 347.6 L1306.0 350.8 L1319.9 352.0" stroke="#ff8000" stroke-width="2" fill="none" stroke-linejoin="round" shape-rendering="crispEdges"/>
<path d="M150.0 397.8 L171.0 397.8 L171.8 398.9 L181.4 398.9 L187.5 401.3 L197.1 402.7 L204.1 403.9 L211.1 405.0 L223.3 406.2 L227.7 408.8 L251.3 408.8 L258.2 407.0 L274.0 407.0 L288.0 410.6 L298.4 411.4 L312.4 413.5 L328.0 414.9 L342.0 417.0 L397.9 417.0 L409.0 417.3 L419.4 418.5 L431.7 419.4 L435.2 420.8 L449.1 421.5 L470.0 420.8 L475.3 418.5 L485.8 416.2 L492.8 410.6 L499.7 406.8 L517.2 401.9 L525.9 398.1 L543.4 393.2 L569.6 389.3 L604.5 385.3 L616.7 382.7 L628.9 375.7 L642.5 368.5 L660.3 356.4 L671.5 353.2 L687.6 345.1 L698.9 333.1 L708.7 328.8 L718.3 322.3 L726.4 311.8 L734.5 309.4 L742.5 305.4 L753.8 294.9 L763.5 286.9 L776.4 274.8 L789.3 269.5 L807.0 265.9 L818.3 264.3 L831.2 257.9 L836.0 255.0 L844.0 255.0 L852.1 259.8 L857.0 261.1 L879.6 260.9 L893.5 262.3 L904.7 260.9 L915.9 258.4 L922.8 257.7 L931.2 260.9 L943.8 257.7 L966.1 257.7 L975.9 259.6 L989.9 259.3 L996.9 258.9 L1008.0 262.3 L1022.0 267.2 L1029.0 268.6 L1037.4 274.9 L1048.5 279.8 L1061.2 281.5 L1071.0 285.0 L1084.9 289.9 L1094.7 293.4 L1108.7 298.2 L1121.2 305.2 L1133.8 311.5 L1141.1 315.3 L1160.3 323.2 L1177.8 328.4 L1202.2 333.6 L1219.7 337.1 L1237.1 341.5 L1254.6 344.5 L1272.0 345.0 L1289.5 347.6 L1307.0 350.8 L1320.9 352.0" stroke="#0000ff" stroke-width="2" fill="none" stroke-linejoin="round" shape-rendering="crispEdges"/>
<path d="M150.0 417.0 L155.2 412.3 L160.5 415.8 L174.4 416.7 L179.7 422.2 L184.9 423.6 L197.1 423.6 L200.6 429.8 L205.9 431.5 L227.7 431.5 L232.0 426.3 L237.3 423.6 L242.5 422.8 L247.8 417.0 L263.5 417.0 L267.0 421.9 L275.7 423.6 L281.8 429.8 L288.0 424.5 L296.6 423.6 L301.9 430.6 L305.4 428.9 L310.6 431.5 L319.3 431.5 L324.6 425.4 L328.9 423.6 L333.3 430.6 L336.8 431.5 L340.3 426.3 L347.3 423.6 L364.7 423.6 L366.5 426.3 L373.5 424.5 L380.4 431.5 L394.4 431.5 L397.9 425.7 L400.2 425.5 L405.5 430.7 L409.0 431.9 L414.2 438.6 L421.2 440.0 L440.4 439.4 L443.9 434.7 L449.1 433.0 L463.1 431.6 L471.8 419.4 L478.8 416.7 L485.8 416.2 L493.6 402.8 L499.7 399.8 L520.7 398.4 L527.7 393.2 L532.9 391.8 L544.3 391.8 L546.9 387.9 L551.2 391.4 L559.1 384.4 L562.6 383.6 L601.9 383.6 L604.5 379.2 L611.5 374.0 L618.5 362.6 L622.0 361.2 L632.9 360.4 L639.3 348.4 L643.3 347.6 L647.4 335.5 L651.4 327.4 L655.4 323.1 L658.6 312.1 L661.9 310.5 L669.1 325.0 L673.1 313.7 L678.0 297.6 L681.2 297.3 L682.0 300.9 L686.0 294.4 L689.2 264.6 L691.7 242.9 L694.1 230.0 L696.3 210.6 L699.8 205.7 L703.3 217.5 L706.8 221.0 L711.0 210.6 L713.0 196.6 L715.8 200.1 L720.0 192.4 L722.8 179.8 L726.3 181.9 L730.5 181.2 L735.4 167.3 L738.9 182.6 L742.4 177.7 L743.8 183.3 L747.3 184.7 L751.5 166.6 L754.2 169.4 L757.0 174.9 L759.8 158.2 L764.0 156.1 L768.2 136.5 L772.4 133.7 L775.2 137.9 L778.7 128.2 L782.9 127.9 L786.4 131.6 L789.2 143.5 L793.4 147.7 L797.5 163.1 L801.7 149.1 L805.9 157.5 L808.0 170.8 L812.9 166.6 L817.1 151.9 L821.3 158.2 L824.8 139.3 L828.3 137.2 L831.1 124.0 L833.2 126.8 L835.3 153.3 L838.0 161.7 L845.0 158.2 L849.2 148.4 L852.0 165.9 L856.9 174.2 L859.7 193.8 L864.6 240.0 L867.7 263.7 L874.0 271.4 L881.0 272.1 L885.1 266.5 L890.7 271.4 L897.7 272.1 L900.5 274.9 L907.5 272.8 L911.7 267.2 L915.9 270.0 L918.7 269.3 L921.5 271.8 L928.4 272.8 L930.5 276.0 L935.4 272.8 L963.4 272.8 L967.5 277.4 L974.5 272.8 L980.1 278.4 L985.0 276.0 L991.3 277.0 L998.3 279.4 L1010.8 279.8 L1015.0 286.8 L1029.0 287.8 L1030.4 293.1 L1033.2 294.7 L1038.8 295.2 L1043.0 291.0 L1047.1 288.9 L1052.7 289.6 L1055.5 293.1 L1060.0 295.2 L1064.0 301.0 L1068.9 303.8 L1080.0 304.3 L1087.0 314.4 L1092.2 318.8 L1099.2 325.8 L1105.3 327.0 L1107.9 332.8 L1111.4 330.2 L1114.9 334.5 L1121.9 336.3 L1124.5 342.0 L1130.6 338.0 L1134.1 343.2 L1140.2 344.1 L1144.6 351.1 L1149.8 350.2 L1155.1 352.0 L1193.5 352.0 L1195.2 354.2 L1200.5 351.5 L1204.0 356.0 L1207.4 353.2 L1212.7 359.8 L1266.8 360.2 L1273.8 361.6 L1280.8 366.8 L1319.2 367.7 L1320.0 372.9" stroke="#ff0000" stroke-width="2" fill="none" stroke-linejoin="round" shape-rendering="crispEdges"/>
<path d="M150 47h1172v2H152v718h1168V49h2v720H150z" fill="#808080"/>
<rect x="152" y="767" width="106" height="1" fill="#00e0ff"/>
<rect x="258" y="767" width="1064" height="3" fill="#00e0ff"/>
<rect x="308" y="764" width="2" height="13" fill="#808080"/>
<rect x="474" y="764" width="2" height="13" fill="#ffe800"/>
<rect x="1109" y="764" width="2" height="13" fill="#808080"/>
<rect x="1136" y="764" width="2" height="13" fill="#ffe800"/>
<path d="M151.5 769V773M200.5 769V773M249.5 769V773M297.5 769V773M346.5 769V773M395.5 769V773M443.5 769V773M492.5 769V773M541.5 769V773M590.5 769V773M639.5 769V773M687.5 769V773M736.5 769V773M785.5 769V773M833.5 769V773M882.5 769V773M931.5 769V773M980.5 769V773M1029.5 769V773M1077.5 769V773M1126.5 769V773M1175.5 769V773M1223.5 769V773M1272.5 769V773M1320.5 769V773" stroke="#808080" stroke-width="1" fill="none" shape-rendering="crispEdges"/>
<text x="151.8" y="786" fill="#000" text-anchor="middle">00:00</text>
<text x="200.8" y="786" fill="#000" text-anchor="middle">01:00</text>
<text x="249.8" y="786" fill="#000" text-anchor="middle">02:00</text>
<text x="297.8" y="786" fill="#000" text-anchor="middle">03:00</text>
<text x="346.8" y="786" fill="#000" text-anchor="middle">04:00</text>
<text x="395.8" y="786" fill="#000" text-anchor="middle">05:00</text>
<text x="443.8" y="786" fill="#000" text-anchor="middle">06:00</text>
<text x="492.8" y="786" fill="#000" text-anchor="middle">07:00</text>
<text x="541.8" y="786" fill="#000" text-anchor="middle">08:00</text>
<text x="590.8" y="786" fill="#000" text-anchor="middle">09:00</text>
<text x="639.8" y="786" fill="#000" text-anchor="middle">10:00</text>
<text x="687.8" y="786" fill="#000" text-anchor="middle">11:00</text>
<text x="736.8" y="786" fill="#000" text-anchor="middle">12:00</text>
<text x="785.8" y="786" fill="#000" text-anchor="middle">13:00</text>
<text x="833.8" y="786" fill="#000" text-anchor="middle">14:00</text>
<text x="882.8" y="786" fill="#000" text-anchor="middle">15:00</text>
<text x="931.8" y="786" fill="#000" text-anchor="middle">16:00</text>
<text x="980.8" y="786" fill="#000" text-anchor="middle">17:00</text>
<text x="1029.8" y="786" fill="#000" text-anchor="middle">18:00</text>
<text x="1077.8" y="786" fill="#000" text-anchor="middle">19:00</text>
<text x="1126.8" y="786" fill="#000" text-anchor="middle">20:00</text>
<text x="1175.8" y="786" fill="#000" text-anchor="middle">21:00</text>
<text x="1223.8" y="786" fill="#000" text-anchor="middle">22:00</text>
<text x="1272.8" y="786" fill="#000" text-anchor="middle">23:00</text>
<text x="1320.8" y="786" fill="#000" text-anchor="middle">24:00</text>
<rect x="40" y="48" width="1" height="721" fill="#808080"/>
<rect x="36" y="48" width="9" height="1" fill="#808080"/>
<text x="34" y="52" fill="#0000ff" text-anchor="end">40.0</text>
<rect x="36" y="120" width="4" height="1" fill="#808080"/>
<text x="34" y="124" fill="#0000ff" text-anchor="end">35.0</text>
<rect x="36" y="192" width="4" height="1" fill="#808080"/>
<text x="34" y="196" fill="#0000ff" text-anchor="end">30.0</text>
<rect x="36" y="264" width="4" height="1" fill="#808080"/>
<text x="34" y="268" fill="#0000ff" text-anchor="end">25.0</text>
<rect x="36" y="336" width="4" height="1" fill="#808080"/>
<text x="34" y="340" fill="#0000ff" text-anchor="end">20.0</text>
<rect x="36" y="408" width="4" height="1" fill="#808080"/>
<text x="34" y="412" fill="#0000ff" text-anchor="end">15.0</text>
<rect x="36" y="480" width="4" height="1" fill="#808080"/>
<text x="34" y="484" fill="#0000ff" text-anchor="end">10.0</text>
<rect x="36" y="552" width="4" height="1" fill="#808080"/>
<text x="34" y="556" fill="#0000ff" text-anchor="end">5.0</text>
<rect x="36" y="624" width="4" height="1" fill="#808080"/>
<text x="34" y="628" fill="#0000ff" text-anchor="end">0.0</text>
<rect x="36" y="696" width="4" height="1" fill="#808080"/>
<text x="34" y="700" fill="#0000ff" text-anchor="end">-5.0</text>
<rect x="36" y="768" width="9" height="1" fill="#808080"/>
<text x="34" y="772" fill="#0000ff" text-anchor="end">-10.0</text>
<rect x="77" y="48" width="1" height="721" fill="#808080"/>
<rect x="73" y="48" width="9" height="1" fill="#808080"/>
<text x="71" y="52" fill="#00f040" text-anchor="end">1040</text>
<rect x="73" y="108" width="4" height="1" fill="#808080"/>
<text x="71" y="112" fill="#00f040" text-anchor="end">1035</text>
<rect x="73" y="168" width="4" height="1" fill="#808080"/>
<text x="71" y="172" fill="#00f040" text-anchor="end">1030</text>
<rect x="73" y="228" width="4" height="1" fill="#808080"/>
<text x="71" y="232" fill="#00f040" text-anchor="end">1025</text>
<rect x="73" y="288" width="4" height="1" fill="#808080"/>
<text x="71" y="292" fill="#00f040" text-anchor="end">1020</text>
<rect x="73" y="348" width="4" height="1" fill="#808080"/>
<text x="71" y="352" fill="#00f040" text-anchor="end">1015</text>
<rect x="73" y="408" width="4" height="1" fill="#808080"/>
<text x="71" y="412" fill="#00f040" text-anchor="end">1010</text>
<rect x="73" y="468" width="4" height="1" fill="#808080"/>
<text x="71" y="472" fill="#00f040" text-anchor="end">1005</text>
<rect x="73" y="528" width="4" height="1" fill="#808080"/>
<text x="71" y="532" fill="#00f040" text-anchor="end">1000</text>
<rect x="73" y="588" width="4" height="1" fill="#808080"/>
<text x="71" y="592" fill="#00f040" text-anchor="end">995</text>
<rect x="73" y="648" width="4" height="1" fill="#808080"/>
<text x="71" y="652" fill="#00f040" text-anchor="end">990</text>
<rect x="73" y="708" width="4" height="1" fill="#808080"/>
<text x="71" y="712" fill="#00f040" text-anchor="end">985</text>
<rect x="73" y="768" width="9" height="1" fill="#808080"/>
<text x="71" y="772" fill="#00f040" text-anchor="end">980</text>
<rect x="114" y="48" width="1" height="721" fill="#808080"/>
<rect x="110" y="48" width="9" height="1" fill="#808080"/>
<text x="108" y="52" fill="#000" text-anchor="end">40.0</text>
<rect x="110" y="138" width="4" height="1" fill="#808080"/>
<text x="108" y="142" fill="#000" text-anchor="end">35.0</text>
<rect x="110" y="228" width="4" height="1" fill="#808080"/>
<text x="108" y="232" fill="#000" text-anchor="end">30.0</text>
<rect x="110" y="318" width="4" height="1" fill="#808080"/>
<text x="108" y="322" fill="#000" text-anchor="end">25.0</text>
<rect x="110" y="408" width="4" height="1" fill="#808080"/>
<text x="108" y="412" fill="#000" text-anchor="end">20.0</text>
<rect x="110" y="498" width="4" height="1" fill="#808080"/>
<text x="108" y="502" fill="#000" text-anchor="end">15.0</text>
<rect x="110" y="588" width="4" height="1" fill="#808080"/>
<text x="108" y="592" fill="#000" text-anchor="end">10.0</text>
<rect x="110" y="678" width="4" height="1" fill="#808080"/>
<text x="108" y="682" fill="#000" text-anchor="end">5.0</text>
<rect x="110" y="768" width="9" height="1" fill="#808080"/>
<text x="108" y="772" fill="#000" text-anchor="end">0.0</text>
<rect x="147" y="48" width="4" height="1" fill="#808080"/>
<text x="145" y="52" fill="#ffe800" text-anchor="end">20</text>
<rect x="147" y="228" width="4" height="1" fill="#808080"/>
<text x="145" y="232" fill="#ffe800" text-anchor="end">15</text>
<rect x="147" y="408" width="4" height="1" fill="#808080"/>
<text x="145" y="412" fill="#ffe800" text-anchor="end">10</text>
<rect x="147" y="588" width="4" height="1" fill="#808080"/>
<text x="145" y="592" fill="#ffe800" text-anchor="end">5</text>
<rect x="147" y="768" width="4" height="1" fill="#808080"/>
<text x="145" y="772" fill="#ffe800" text-anchor="end">0</text>
<text x="25" y="36" fill="#0000ff" text-anchor="middle">°C</text>
<text x="58" y="36" fill="#00f040" text-anchor="middle">hPa</text>
<text x="92" y="36" fill="#000" text-anchor="middle">km/h</text>
<text x="134" y="36" fill="#ffe800" text-anchor="middle">min</text>
<rect x="1322" y="48" width="4" height="1" fill="#808080"/>
<text x="1328" y="52" fill="#804000">100</text>
<rect x="1322" y="120" width="4" height="1" fill="#808080"/>
<text x="1328" y="124" fill="#804000">90</text>
<rect x="1322" y="192" width="4" height="1" fill="#808080"/>
<text x="1328" y="196" fill="#804000">80</text>
<rect x="1322" y="264" width="4" height="1" fill="#808080"/>
<text x="1328" y="268" fill="#804000">70</text>
<rect x="1322" y="336" width="4" height="1" fill="#808080"/>
<text x="1328" y="340" fill="#804000">60</text>
<rect x="1322" y="408" width="4" height="1" fill="#808080"/>
<text x="1328" y="412" fill="#804000">50</text>
<rect x="1322" y="480" width="4" height="1" fill="#808080"/>
<text x="1328" y="484" fill="#804000">40</text>
<rect x="1322" y="552" width="4" height="1" fill="#808080"/>
<text x="1328" y="556" fill="#804000">30</text>
<rect x="1322" y="624" width="4" height="1" fill="#808080"/>
<text x="1328" y="628" fill="#804000">20</text>
<rect x="1322" y="696" width="4" height="1" fill="#808080"/>
<text x="1328" y="700" fill="#804000">10</text>
<rect x="1322" y="768" width="4" height="1" fill="#808080"/>
<text x="1328" y="772" fill="#804000">0</text>
<rect x="1358" y="48" width="1" height="721" fill="#808080"/>
<rect x="1354" y="48" width="9" height="1" fill="#808080"/>
<text x="1365" y="52" fill="#00e0ff">40.0</text>
<rect x="1359" y="228" width="4" height="1" fill="#808080"/>
<text x="1365" y="232" fill="#00e0ff">30.0</text>
<rect x="1359" y="408" width="4" height="1" fill="#808080"/>
<text x="1365" y="412" fill="#00e0ff">20.0</text>
<rect x="1359" y="588" width="4" height="1" fill="#808080"/>
<text x="1365" y="592" fill="#00e0ff">10.0</text>
<rect x="1354" y="768" width="9" height="1" fill="#808080"/>
<text x="1365" y="772" fill="#00e0ff">0.0</text>
<rect x="1395" y="48" width="1" height="721" fill="#808080"/>
<rect x="1391" y="48" width="9" height="1" fill="#808080"/>
<text x="1402" y="52" fill="#808080">360 N</text>
<rect x="1396" y="108" width="4" height="1" fill="#808080"/>
<text x="1402" y="112" fill="#808080">330</text>
<rect x="1396" y="168" width="4" height="1" fill="#808080"/>
<text x="1402" y="172" fill="#808080">300</text>
<rect x="1396" y="228" width="4" height="1" fill="#808080"/>
<text x="1402" y="232" fill="#808080">270 W</text>
<rect x="1396" y="288" width="4" height="1" fill="#808080"/>
<text x="1402" y="292" fill="#808080">240</text>
<rect x="1396" y="348" width="4" height="1" fill="#808080"/>
<text x="1402" y="352" fill="#808080">210</text>
<rect x="1396" y="408" width="4" height="1" fill="#808080"/>
<text x="1402" y="412" fill="#808080">180 S</text>
<rect x="1396" y="468" width="4" height="1" fill="#808080"/>
<text x="1402" y="472" fill="#808080">150</text>
<rect x="1396" y="528" width="4" height="1" fill="#808080"/>
<text x="1402" y="532" fill="#808080">120</text>
<rect x="1396" y="588" width="4" height="1" fill="#808080"/>
<text x="1402" y="592" fill="#808080">90 O</text>
<rect x="1396" y="648" width="4" height="1" fill="#808080"/>
<text x="1402" y="652" fill="#808080">60</text>
<rect x="1396" y="708" width="4" height="1" fill="#808080"/>
<text x="1402" y="712" fill="#808080">30</text>
<rect x="1391" y="768" width="9" height="1" fill="#808080"/>
<text x="1402" y="772" fill="#808080">0 N</text>
<text x="1325" y="36" fill="#804000" text-anchor="middle">%</text>
<text x="1367" y="36" fill="#00e0ff" text-anchor="middle">l/m²</text>
<text x="1397" y="36" fill="#808080" text-anchor="middle" style="font-size:10px">°</text>
<text x="718" y="21" fill="#000" text-anchor="middle" style="font-size:16px">Samstag, 31.08.2024</text>
<text x="1431" y="15" fill="#000" text-anchor="end" textLength="174" lengthAdjust="spacingAndGlyphs">Wetterstation Niedersorpe 440m NN</text>
<rect x="161.5" y="33.5" width="9" height="9" fill="#0000ff" stroke="#000" stroke-width="1" shape-rendering="crispEdges"/>
<text x="175" y="42" fill="#0000ff">Temp. 2m*</text>
<rect x="256.5" y="33.5" width="9" height="9" fill="#ff0000" stroke="#000" stroke-width="1" shape-rendering="crispEdges"/>
<text x="270" y="42" fill="#0000ff">Temp. 5cm*</text>
<rect x="351.5" y="33.5" width="9" height="9" fill="#804000" stroke="#000" stroke-width="1" shape-rendering="crispEdges"/>
<text x="365" y="42" fill="#804000">Feuchte A.*</text>
<rect x="446.5" y="33.5" width="9" height="9" fill="#00ff40" stroke="#000" stroke-width="1" shape-rendering="crispEdges"/>
<text x="460" y="42" fill="#00ff40">Luftdruck*</text>
<rect x="541.5" y="33.5" width="9" height="9" fill="#00e0ff" stroke="#000" stroke-width="1" shape-rendering="crispEdges"/>
<text x="555" y="42" fill="#00e0ff">Regen*</text>
<rect x="636.5" y="33.5" width="9" height="9" fill="#000" stroke="#000" stroke-width="1" shape-rendering="crispEdges"/>
<text x="650" y="42" fill="#000">Wind*</text>
<rect x="731.5" y="33.5" width="9" height="9" fill="#808080" stroke="#000" stroke-width="1" shape-rendering="crispEdges"/>
<text x="745" y="42" fill="#808080">Richtung*</text>
<rect x="826.5" y="33.5" width="9" height="9" fill="#ffe800" stroke="#000" stroke-width="1" shape-rendering="crispEdges"/>
<text x="840" y="42" fill="#ffe800">Sonnenschein</text>
<rect x="921.5" y="33.5" width="9" height="9" fill="#008040" stroke="#000" stroke-width="1" shape-rendering="crispEdges"/>
<text x="935" y="42" fill="#0000ff">Taupunkt*</text>
<rect x="1016.5" y="33.5" width="9" height="9" fill="#ff8000" stroke="#000" stroke-width="1" shape-rendering="crispEdges"/>
<text x="1030" y="42" fill="#0000ff">Windchill</text>
<rect x="1111.5" y="33.5" width="9" height="9" fill="#8000ff" stroke="#000" stroke-width="1" shape-rendering="crispEdges"/>
<text x="1125" y="42" fill="#000">Windböen</text>
<text x="10" y="798" fill="#000">13:34</text>
<path d="M40 797.5a4.5 4.5 0 0 1 9 0z" fill="#ffff00"/>
<text x="316" y="798" fill="#000">03:14</text>
<text x="1104" y="798" fill="#000">20:13</text>
<text x="442" y="798" fill="#000">06:38</text>
<circle cx="475.5" cy="793.5" r="3.5" fill="#ffff00"/>
<path d="M471 788.5l2 2M480 788.5l-2 2M471 798.5l2-2M480 798.5l-2-2M475.5 788v1.5M475.5 799v-1.5M470.5 793.5h1.5M480.5 793.5h-1.5" stroke="#ffff80" stroke-width="1"/>
<rect x="1134.5" y="791.5" width="5" height="5" fill="none" stroke="#ffe800" stroke-width="1"/>
<rect x="304.5" y="788.5" width="6" height="6" fill="none" stroke="#8080e0" stroke-width="1" stroke-dasharray="1 3"/>
<path d="M311 790l3 4v5h-2l-1-2-1 2h-2v-5z" fill="#ffee00" stroke="#000" stroke-width="0.6"/>
<rect x="0" y="800" width="1432" height="90" fill="#ff8000"/>
<rect x="0" y="890" width="1432" height="1" fill="#a0a0a0"/>
<rect x="0" y="891" width="1432" height="1" fill="#ffffff"/>
<rect x="0" y="892" width="1432" height="1" fill="#d8d0dc"/>
<rect x="0" y="893" width="1432" height="38" fill="#ffffff"/>
<rect x="87" y="800" width="1" height="89" fill="#ffffff"/>
<rect x="88" y="800" width="1" height="89" fill="#98a0b0"/>
<rect x="204" y="800" width="1" height="89" fill="#ffffff"/>
<rect x="205" y="800" width="1" height="89" fill="#98a0b0"/>
<rect x="322" y="800" width="1" height="89" fill="#ffffff"/>
<rect x="323" y="800" width="1" height="89" fill="#98a0b0"/>
<rect x="440" y="800" width="1" height="89" fill="#ffffff"/>
<rect x="441" y="800" width="1" height="89" fill="#98a0b0"/>
<rect x="558" y="800" width="1" height="89" fill="#ffffff"/>
<rect x="559" y="800" width="1" height="89" fill="#98a0b0"/>
<rect x="676" y="800" width="1" height="89" fill="#ffffff"/>
<rect x="677" y="800" width="1" height="89" fill="#98a0b0"/>
<rect x="794" y="800" width="1" height="89" fill="#ffffff"/>
<rect x="795" y="800" width="1" height="89" fill="#98a0b0"/>
<rect x="912" y="800" width="1" height="89" fill="#ffffff"/>
<rect x="913" y="800" width="1" height="89" fill="#98a0b0"/>
<rect x="0" y="893" width="87" height="36" fill="#2ee81e"/>
<rect x="89" y="893" width="115" height="36" fill="#2ee81e"/>
<rect x="206" y="893" width="116" height="36" fill="#2ee81e"/>
<rect x="324" y="893" width="116" height="36" fill="#2ee81e"/>
<rect x="442" y="893" width="116" height="36" fill="#2ee81e"/>
<rect x="560" y="893" width="870" height="36" fill="#2ee81e"/>
<rect x="87" y="892" width="1" height="39" fill="#ffffff"/>
<rect x="88" y="892" width="1" height="39" fill="#a0a0a0"/>
<rect x="204" y="892" width="1" height="39" fill="#ffffff"/>
<rect x="205" y="892" width="1" height="39" fill="#a0a0a0"/>
<rect x="322" y="892" width="1" height="39" fill="#ffffff"/>
<rect x="323" y="892" width="1" height="39" fill="#a0a0a0"/>
<rect x="440" y="892" width="1" height="39" fill="#ffffff"/>
<rect x="441" y="892" width="1" height="39" fill="#a0a0a0"/>
<rect x="558" y="892" width="1" height="39" fill="#ffffff"/>
<rect x="559" y="892" width="1" height="39" fill="#a0a0a0"/>
<rect x="0" y="930" width="1432" height="1" fill="#a0a0a0"/>
<rect x="1431" y="892" width="1" height="39" fill="#a0a0a0"/>
<text x="8" y="818" fill="#000" style="font-size:11.5px;font-weight:bold">Sensor</text>
<text x="8" y="834" fill="#000" style="font-size:11.5px;font-weight:bold">MinWert</text>
<text x="8" y="850" fill="#000" style="font-size:11.5px;font-weight:bold">MaxWert</text>
<text x="8" y="866" fill="#000" style="font-size:11.5px;font-weight:bold">Durchschnitt</text>
<text x="8" y="882" fill="#000" style="font-size:11.5px;font-weight:bold">31.08. 23:59</text>
<text x="94" y="818" fill="#000" style="font-size:11.5px;font-weight:bold">Temp. 2m</text>
<text x="199" y="818" fill="#000" text-anchor="end" style="font-size:11.5px;font-weight:bold">°C</text>
<text x="100" y="834" fill="#000">06:04</text>
<text x="197.5" y="834" fill="#000" text-anchor="end">14.0</text>
<text x="101" y="850" fill="#000">14:01</text>
<text x="197.5" y="850" fill="#000" text-anchor="end">25.7</text>
<text x="197.5" y="866" fill="#000" text-anchor="end">19.46</text>
<text x="96.5" y="882" fill="#000">F: 79 %</text>
<text x="199" y="882" fill="#000" text-anchor="end" style="font-size:11.5px;font-weight:bold">18.9</text>
<text x="212.5" y="818" fill="#000" style="font-size:11.5px;font-weight:bold">Temp. 5cm</text>
<text x="317" y="818" fill="#000" text-anchor="end" style="font-size:11.5px;font-weight:bold">°C</text>
<text x="217.5" y="834" fill="#000">05:19</text>
<text x="315.8" y="834" fill="#000" text-anchor="end">12.8</text>
<text x="219" y="850" fill="#000">13:57</text>
<text x="315.8" y="850" fill="#000" text-anchor="end">35.6</text>
<text x="315.8" y="866" fill="#000" text-anchor="end">20.03</text>
<text x="317" y="882" fill="#000" text-anchor="end" style="font-size:11.5px;font-weight:bold">17.2</text>
<text x="330" y="818" fill="#000" style="font-size:11.5px;font-weight:bold">Feuchte A.</text>
<text x="434.5" y="818" fill="#000" text-anchor="end" style="font-size:11.5px;font-weight:bold">%</text>
<text x="337" y="834" fill="#000">14:02</text>
<text x="433.5" y="834" fill="#000" text-anchor="end">59</text>
<text x="335.7" y="850" fill="#000">06:51</text>
<text x="433.5" y="850" fill="#000" text-anchor="end">94</text>
<text x="433.5" y="866" fill="#000" text-anchor="end">78</text>
<text x="333.7" y="882" fill="#000">12.81 g/m³</text>
<text x="434.5" y="882" fill="#000" text-anchor="end" style="font-size:11.5px;font-weight:bold">79</text>
<text x="448.4" y="818" fill="#000" style="font-size:11.5px;font-weight:bold">Regen</text>
<text x="552" y="818" fill="#000" text-anchor="end" style="font-size:11.5px;font-weight:bold">l/m²</text>
<text x="454" y="850" fill="#000">00:00</text>
<text x="551.5" y="850" fill="#000" text-anchor="end">0.0</text>
<text x="447.6" y="866" fill="#000">Gesamt:</text>
<text x="551.5" y="866" fill="#000" text-anchor="end">0.0</text>
<text x="451" y="882" fill="#000">0.0 l/m²</text>
<text x="552" y="882" fill="#000" text-anchor="end" style="font-size:11.5px;font-weight:bold">0.0</text>
<text x="565.7" y="818" fill="#000" style="font-size:11.5px;font-weight:bold">Luftdruck</text>
<text x="670.5" y="818" fill="#000" text-anchor="end" style="font-size:11.5px;font-weight:bold">hPa</text>
<text x="572.7" y="834" fill="#000">19:44</text>
<text x="669" y="834" fill="#000" text-anchor="end">1019.0</text>
<text x="571.6" y="850" fill="#000">08:55</text>
<text x="669" y="850" fill="#000" text-anchor="end">1021.6</text>
<text x="566.8" y="866" fill="#000">^0.7hPa/h</text>
<text x="669" y="866" fill="#000" text-anchor="end">1020.5</text>
<text x="565.7" y="882" fill="#000">sonnig</text>
<text x="670.5" y="882" fill="#000" text-anchor="end" style="font-size:11.5px;font-weight:bold">1019.3</text>
<text x="684.4" y="818" fill="#000" style="font-size:11.5px;font-weight:bold">Sonnenschein</text>
<text x="789.5" y="818" fill="#000" text-anchor="end" style="font-size:11.5px;font-weight:bold">min</text>
<text x="690.7" y="850" fill="#000">10:53</text>
<text x="787.5" y="850" fill="#000" text-anchor="end">1</text>
<text x="684.4" y="866" fill="#000">7:17 h</text>
<text x="787.5" y="866" fill="#000" text-anchor="end">0</text>
<text x="789.5" y="882" fill="#000" text-anchor="end" style="font-size:11.5px;font-weight:bold">0</text>
<text x="802" y="818" fill="#000" style="font-size:11.5px;font-weight:bold">Windböen</text>
<text x="906" y="818" fill="#000" text-anchor="end" style="font-size:11.5px;font-weight:bold">km/h</text>
<text x="801.4" y="834" fill="#000">Ø 10 min.</text>
<text x="905.5" y="834" fill="#000" text-anchor="end">0.3</text>
<text x="807.7" y="850" fill="#000">08:08</text>
<text x="905.5" y="850" fill="#000" text-anchor="end">S-SO 22.7</text>
<text x="808.4" y="866" fill="#000">5.9 km</text>
<text x="905.5" y="866" fill="#000" text-anchor="end">0.2</text>
<text x="807.7" y="882" fill="#000">0 Bft - -</text>
<text x="906" y="882" fill="#000" text-anchor="end" style="font-size:11.5px;font-weight:bold">0.0</text>
<text x="920" y="818" fill="#000" style="font-size:11.5px;font-weight:bold">Wind</text>
<text x="1022" y="818" fill="#000" text-anchor="end" style="font-size:11.5px;font-weight:bold">km/h</text>
<text x="920" y="834" fill="#000">Ø 10 min.</text>
<text x="1021.5" y="834" fill="#000" text-anchor="end">0.0</text>
<text x="926" y="850" fill="#000">00:00</text>
<text x="1021.5" y="850" fill="#000" text-anchor="end">O 0.0</text>
<text x="926.4" y="866" fill="#000">5.9 km</text>
<text x="1021.5" y="866" fill="#000" text-anchor="end">0.0</text>
<text x="926" y="882" fill="#000">0 Bft O-SO</text>
<text x="1022" y="882" fill="#000" text-anchor="end" style="font-size:11.5px;font-weight:bold">0.0</text>
<text x="7.7" y="908" fill="#000">Wetterdaten</text>
<text x="7.7" y="923" fill="#000">31.08.24 23:59</text>
<text x="93.7" y="908" fill="#000">Temp. I.</text>
<text x="198" y="908" fill="#000" text-anchor="end">25.6 °C</text>
<text x="93.7" y="923" fill="#000">Feuchte I.</text>
<text x="198" y="923" fill="#000" text-anchor="end">54 %</text>
<text x="210" y="908" fill="#000">Temp. 2m</text>
<text x="314.5" y="908" fill="#000" text-anchor="end">18.9 °C</text>
<text x="210" y="923" fill="#000">Feuchte A.</text>
<text x="314.5" y="923" fill="#000" text-anchor="end">79 %</text>
<text x="329.4" y="908" fill="#000">Luftdruck</text>
<text x="434" y="908" fill="#000" text-anchor="end">1019.3 hPa</text>
<text x="329.4" y="923" fill="#000">Regen</text>
<text x="434" y="923" fill="#000" text-anchor="end">0.0 l/m²</text>
<text x="447.8" y="908" fill="#000">Wind</text>
<text x="552" y="908" fill="#000" text-anchor="end">0.0 km/h</text>
<text x="447.8" y="923" fill="#000">Richtung</text>
<text x="552" y="923" fill="#000" text-anchor="end">O-SO</text>
<text x="1099.5" y="908" fill="#000">WR 114°</text>
<text x="1169.5" y="908" fill="#000">Solar</text>
<text x="1285" y="908" fill="#000" text-anchor="end">0 W/m²</text>
<text x="1309" y="908" fill="#000">UV</text>
<text x="1425" y="908" fill="#000" text-anchor="end">0.0 UV-I</text>
<text x="1099.5" y="923" fill="#000">WC 18.9°C</text>
<text x="1169.5" y="923" fill="#000">ET</text>
<text x="1276" y="923" fill="#000" text-anchor="end">0.000 mm</text>
<text x="1309" y="923" fill="#000">Taupunkt</text>
<text x="1416" y="923" fill="#000" text-anchor="end">15.2 °C</text>
<defs><linearGradient id="sky" x1="0" y1="0" x2="1" y2="1"><stop offset="0" stop-color="#4a8ac4"/><stop offset="1" stop-color="#a4d0ec"/></linearGradient><radialGradient id="sun" cx="0.5" cy="0.5" r="0.5"><stop offset="0" stop-color="#ffffa0"/><stop offset="0.6" stop-color="#f0f000"/><stop offset="1" stop-color="#e0e000"/></radialGradient></defs>
<rect x="562" y="894" width="34" height="34" fill="url(#sky)"/>
<rect x="562" y="894" width="34" height="1" fill="#102040"/><rect x="562" y="894" width="1" height="34" fill="#102040"/>
<path d="M579 898L581 906L588 902L584 909L592 911L584 913L588 920L581 916L579 924L577 916L570 920L574 913L566 911L574 909L570 902L577 906Z" fill="#e8e820"/>
<circle cx="579" cy="911" r="5.5" fill="url(#sun)"/>
</svg></body></html>
